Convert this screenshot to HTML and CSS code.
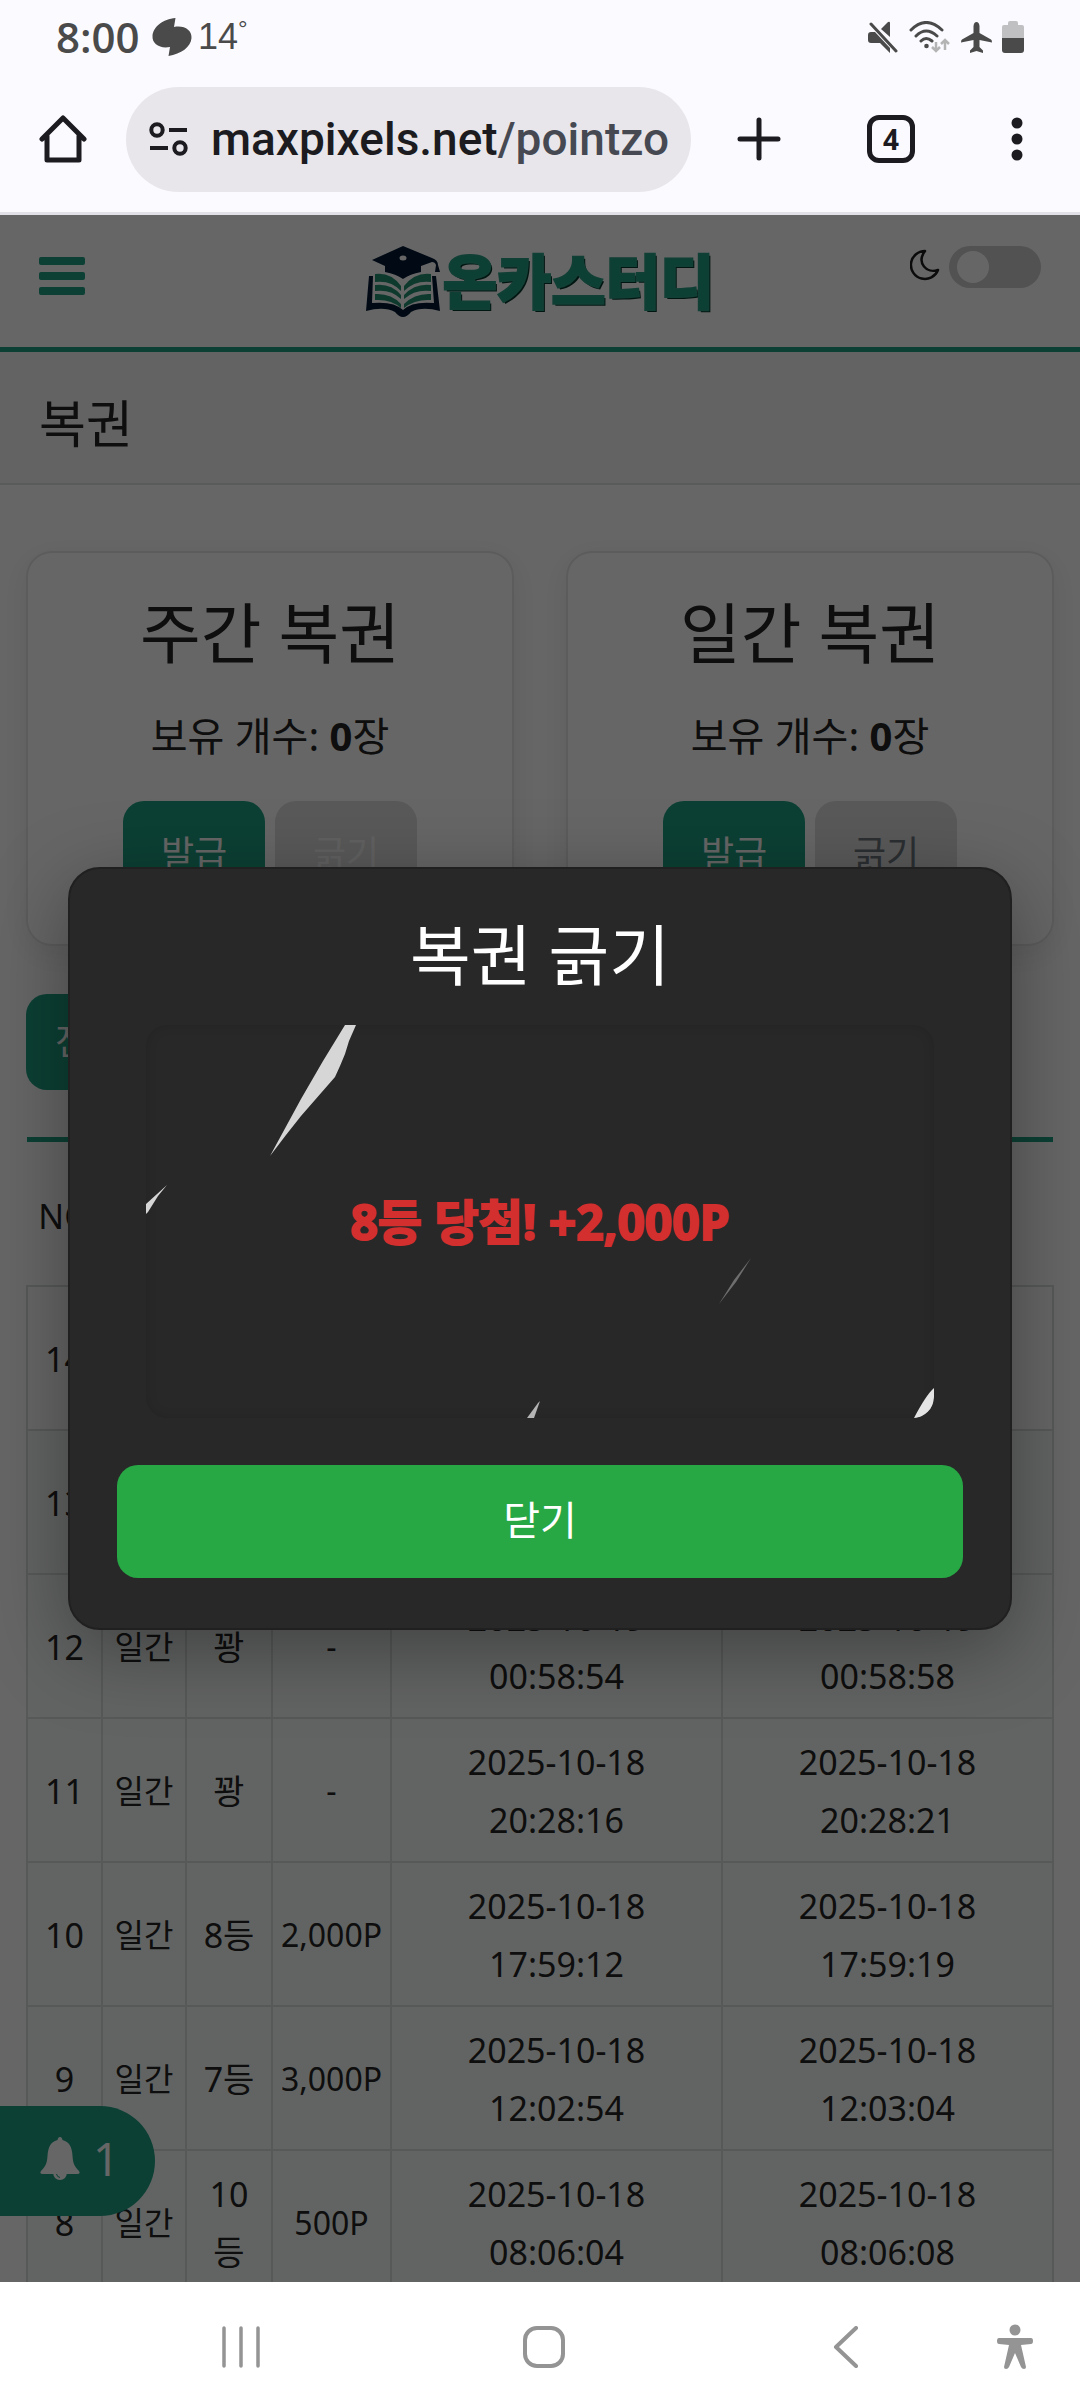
FILE: index.html
```html
<!DOCTYPE html>
<html lang="ko">
<head>
<meta charset="utf-8">
<meta name="viewport" content="width=device-width, initial-scale=1">
<title>복권</title>
<link rel="stylesheet" href="styles.css">
</head>
<body>
<div class="statusbar">
  <div class="status-left">
    <span class="clock">8:00</span>
    <svg class="weather" width="40" height="38" viewBox="0 0 40 38" aria-hidden="true"><path fill="#4a4a4a" d="M23.500 0 L22 9 C32 7 40 12 39.500 20 C39 29 29 36 16.500 38 L18 29 C8 31 0 26 .5 18 C1 9 11 1 23.500 0Z"/></svg>
    <span class="temp">14<sup>°</sup></span>
  </div>
  <div class="status-right">
    <svg width="31" height="32" viewBox="0 0 31 32" aria-hidden="true"><g fill="#4a4a4a"><path d="M0 14Q0 11 3 11H7L22 27V32L12 22H3Q0 22 0 19Z"/><path d="M13 8 20 1Q22 0 22 2V16Z"/></g><path d="M3 3 28 30" stroke="#4a4a4a" stroke-width="3" stroke-linecap="round"/></svg>
    <svg width="42" height="32" viewBox="0 0 42 32" aria-hidden="true"><g fill="none" stroke="#4a4a4a" stroke-width="3" stroke-linecap="round"><path d="M2 9Q17-6 33 9M7 15Q17 5 28 15M12 20Q17 15 23 20"/></g><circle cx="17.500" cy="25" r="2.300" fill="#4a4a4a"/><g fill="none" stroke="#b4b4b4" stroke-width="2.500"><path d="M27 21V30M23 26 27 30 31 26M36 29V19M32 23 36 19 40 23"/></g></svg>
    <svg width="31" height="31" viewBox="0 0 31 31" aria-hidden="true"><path fill="#4a4a4a" d="M15.500 0Q18 0 18.500 4V11L30 17.500Q31 18 31 20.500L18.500 18V25L22 28.500V31L15.500 29 9 31V28.500L12.500 25V18L0 20.500Q0 18 1 17.500L12.500 11V4Q13 0 15.500 0Z"/></svg>
    <svg width="22" height="32" viewBox="0 0 22 32" aria-hidden="true"><path fill="#c0c0c2" d="M6 2Q6 0 8 0H14Q16 0 16 2V4H20Q22 4 22 6V17H0V6Q0 4 2 4H6Z"/><path fill="#4a4a4a" d="M0 17H22V29Q22 32 19 32H3Q0 32 0 29Z"/></svg>
  </div>
</div>

<div class="toolbar">
  <button class="icon-btn" aria-label="홈"><svg width="48" height="48" viewBox="0 0 48 48"><path d="M3 24 24 3 45 24M8 21V45H40V21" fill="none" stroke="#1b1b20" stroke-width="5" stroke-linejoin="round" stroke-linecap="round"/></svg></button>
  <button class="omnibox"><svg class="tune" width="40" height="34" viewBox="0 0 40 34" aria-hidden="true"><g fill="none" stroke="#1b1b20" stroke-width="4"><circle cx="8" cy="8" r="5.700"/><path d="M20 8H38M1 26H19"/><circle cx="31" cy="26" r="5.700"/></g></svg><span class="url">maxpixels.net<span class="path">/pointzone</span></span></button>
  <div class="tools">
    <button class="icon-btn" aria-label="새 탭"><svg width="44" height="44" viewBox="0 0 44 44"><path d="M22 3V41M3 22H41" stroke="#1b1b20" stroke-width="5" stroke-linecap="round"/></svg></button>
    <button class="tabs" aria-label="탭 4개">4</button>
    <button class="icon-btn" aria-label="메뉴"><svg width="12" height="44" viewBox="0 0 12 44"><g fill="#1b1b20"><circle cx="6" cy="6" r="5.500"/><circle cx="6" cy="22" r="5.500"/><circle cx="6" cy="38" r="5.500"/></g></svg></button>
  </div>
</div>

<div class="page">
  <header class="site-header">
    <button class="hamburger" aria-label="전체 메뉴"><span></span><span></span><span></span></button>
    <a class="logo" href="#">
      <svg width="74" height="72" viewBox="0 0 74 72" aria-hidden="true">
        <path fill="#001833" d="M6 14 37 0 66 12 Q72 14 72 19L74 26H69L70 19Q69 16 66 16L55 20V26Q44 28 37 33 30 28 19 26V20Z"/>
        <ellipse cx="37" cy="12" rx="3.500" ry="2.500" fill="#fff"/>
        <g fill="#258f72"><path d="M9 28Q25 26 35 40V45Q25 34 9 36Z"/><path d="M9 39Q25 37 35 49V53Q25 43 9 45Z"/><path d="M9 48Q25 47 35 58V62Q25 53 9 54Z"/><path d="M65 28Q49 26 38 40V45Q49 34 65 36Z"/><path d="M65 39Q49 37 38 49V53Q49 43 65 45Z"/><path d="M65 48Q49 47 38 58V62Q49 53 65 54Z"/></g>
        <path fill="#001833" d="M3 30H7L6 57Q28 55 37 64 46 55 68 57L66 30H70L74 65Q56 60 45 66 37 76 29 66 18 60 0 65Z"/>
      </svg>
      <span class="logo-text">온카스터디</span>
    </a>
    <label class="theme">
      <svg width="30" height="32" viewBox="0 0 30 32" aria-hidden="true"><path d="M15 2A14 14 0 1 0 28 21C17 25 6 14 15 2Z" fill="none" stroke="#1d1d1d" stroke-width="2.500" stroke-linejoin="round"/></svg>
      <input type="checkbox" aria-label="다크 모드">
    </label>
  </header>

  <h1 class="page-title">복권</h1>

  <main class="content">
    <div class="cards">
      <section class="card">
        <h2>주간 복권</h2>
        <p>보유 개수: <strong>0</strong>장</p>
        <div class="card-actions"><button class="btn">발급</button><button class="btn btn-light" disabled>긁기</button></div>
      </section>
      <section class="card">
        <h2>일간 복권</h2>
        <p>보유 개수: <strong>0</strong>장</p>
        <div class="card-actions"><button class="btn">발급</button><button class="btn btn-light">긁기</button></div>
      </section>
    </div>

    <button class="btn filter">전체</button>

    <table class="history">
      <colgroup><col class="c-no"><col class="c-type"><col class="c-rank"><col class="c-prize"><col><col></colgroup>
      <thead><tr><th>NO</th><th>종류</th><th>결과</th><th>당첨금</th><th>발급일</th><th>사용일</th></tr></thead>
      <tbody>
        <tr><td>14</td><td>일간</td><td>8등</td><td>2,000P</td><td>2025-10-19 20:11:02</td><td>2025-10-19 20:11:08</td></tr>
        <tr><td>13</td><td>일간</td><td>꽝</td><td>-</td><td>2025-10-19 10:24:31</td><td>2025-10-19 10:24:36</td></tr>
        <tr><td>12</td><td>일간</td><td>꽝</td><td>-</td><td>2025-10-19 00:58:54</td><td>2025-10-19 00:58:58</td></tr>
        <tr><td>11</td><td>일간</td><td>꽝</td><td>-</td><td>2025-10-18 20:28:16</td><td>2025-10-18 20:28:21</td></tr>
        <tr><td>10</td><td>일간</td><td>8등</td><td>2,000P</td><td>2025-10-18 17:59:12</td><td>2025-10-18 17:59:19</td></tr>
        <tr><td>9</td><td>일간</td><td>7등</td><td>3,000P</td><td>2025-10-18 12:02:54</td><td>2025-10-18 12:03:04</td></tr>
        <tr><td>8</td><td>일간</td><td>10등</td><td>500P</td><td>2025-10-18 08:06:04</td><td>2025-10-18 08:06:08</td></tr>
      </tbody>
    </table>
  </main>

  <button class="notice" aria-label="알림 1개"><svg width="40" height="43" viewBox="0 0 40 43" aria-hidden="true"><path fill="#fff" d="M20 0Q22 0 22.500 3C30 5 32 11 32.500 19 33 27 35 30 39 34Q41 37 37 37H3Q-1 37 1 34C5 30 7 27 7.500 19 8 11 10 5 17.500 3Q18 0 20 0Z"/><path fill="#fff" d="M13 36H27Q26 43 20 43 14 43 13 36Z"/><path d="M16.500 37Q17 40 20 40.500" fill="none" stroke="#1ea082" stroke-width="1"/></svg><span>1</span></button>

  <div class="overlay">
    <div class="modal" role="dialog" aria-modal="true" aria-labelledby="scratch-title">
      <h2 id="scratch-title">복권 긁기</h2>
      <div class="scratch">
        <svg class="flakes" viewBox="0 0 788 393" aria-hidden="true">
          <g fill="#d6d6d6">
            <path d="M199 0H210L203 16 199 29 194 41 189 52 155 91 140 110 124 131 155 74 177 36Z"/>
            <path d="M0 179 21 160 12 171 2 187 0 189Z"/>
            <path fill="#b4b4b4" d="M381 393 392 378 394 376 388 393Z"/>
            <path fill="#e4e4e4" d="M768 393Q780 370 788 363V373A20 20 0 0 1 770 393Z"/>
          </g>
          <path fill="#6e6e6e" d="M605 233 590 257 573 279 588 255ZM399 364 393 376 390 382Z"/>
        </svg>
        <strong>8등 당첨! +2,000P</strong>
      </div>
      <button class="close">닫기</button>
    </div>
  </div>
</div>

<nav class="sysnav">
  <button class="recents" aria-label="최근 앱"><svg width="42" height="42" viewBox="0 0 42 42"><path d="M4 2V40M21 2V40M38 2V40" stroke="#949494" stroke-width="3.500" stroke-linecap="round"/></svg></button>
  <button class="home" aria-label="홈 화면"><svg width="42" height="42" viewBox="0 0 42 42"><rect x="2" y="2" width="38" height="38" rx="12" fill="none" stroke="#949494" stroke-width="4"/></svg></button>
  <button class="back" aria-label="뒤로"><svg width="26" height="42" viewBox="0 0 26 42"><path d="M23 2 3 21 23 40" fill="none" stroke="#949494" stroke-width="4" stroke-linecap="round" stroke-linejoin="round"/></svg></button>
  <button class="access" aria-label="접근성"><svg width="38" height="46" viewBox="0 0 38 46"><g fill="#949494"><circle cx="19" cy="6" r="5.500"/><path d="M3 14H35Q37 14 37 17T35 20L25 21 30 43Q30 45 28 45T25 43L19 29 13 43Q12 45 10 45T8 43L13 21 3 20Q1 20 1 17T3 14Z"/></g></svg></button>
</nav>
</body>
</html>
```
FILE: styles.css
```css
* { box-sizing: border-box; }

:root {
  --green: #1ea082;
  --ink: #242424;
  --chrome: #fbfaff;
}

body {
  margin: 0;
  height: 100vh;
  display: flex;
  flex-direction: column;
  overflow: hidden;
  background: #fff;
  color: var(--ink);
  font-family: "Noto Sans", "Noto Sans CJK KR", sans-serif;
}

button {
  padding: 0;
  border: 0;
  background: none;
  font: inherit;
  color: inherit;
}

svg { display: block; }
h1, h2, p { margin: 0; font-weight: 400; }

/* status bar */
.statusbar {
  display: flex;
  justify-content: space-between;
  align-items: center;
  height: 74px;
  padding: 0 56px;
  background: var(--chrome);
  color: #4a4a4a;
}
.status-left, .status-right { display: flex; align-items: center; }
.clock { width: 96px; font: 600 42px/48px "Open Sans", sans-serif; }
.temp { margin-left: 6px; font: 400 36px/48px "Liberation Sans", sans-serif; }
.temp sup { font-size: 24px; line-height: 0; vertical-align: 12px; }
.status-right { gap: 10px; }

/* browser toolbar */
.toolbar {
  display: flex;
  align-items: center;
  height: 141px;
  padding: 0 57px 8px 39px;
  border-bottom: 3px solid #e2e1e8;
  background: var(--chrome);
}
.omnibox {
  display: flex;
  align-items: center;
  flex: 1;
  min-width: 0;
  height: 105px;
  margin: 0 46px 0 39px;
  padding: 0 20px 0 23px;
  border-radius: 53px;
  background: #e8e6eb;
  text-align: left;
}
.tune { flex: none; }
.url {
  flex: 1;
  margin-left: 22px;
  overflow: hidden;
  white-space: nowrap;
  font: 500 46px/64px Roboto, sans-serif;
  color: #1b1b20;
}
.path { color: #464952; }
.tools { display: flex; align-items: center; }
.tabs {
  width: 48px;
  height: 48px;
  margin: 0 96px 0 86px;
  border: 5px solid #1b1b20;
  border-radius: 12px;
  font: 700 28px/38px "Noto Sans", sans-serif;
  text-align: center;
  color: #1b1b20;
}

/* page */
.page {
  position: relative;
  flex: 1;
  min-height: 0;
  overflow: hidden;
  background: #fff;
}
.site-header {
  display: grid;
  grid-template-columns: 1fr auto 1fr;
  height: 137px;
  padding: 0 39px;
  border-bottom: 5px solid var(--green);
}
.hamburger {
  display: flex;
  flex-direction: column;
  gap: 7px;
  width: 46px;
  height: 38px;
  margin-top: 42px;
}
.hamburger span { width: 100%; height: 8px; border-radius: 2px; background: var(--green); }
.logo {
  display: flex;
  gap: 3px;
  margin-top: 31px;
  height: 72px;
  text-decoration: none;
}
.logo-text {
  font: 900 59px/66px "Noto Sans CJK KR", sans-serif;
  color: var(--green);
  -webkit-text-stroke: 2px #2a9f84;
  text-shadow: 2px 2px 0 #06382c;
}
.theme {
  display: flex;
  justify-content: flex-end;
  gap: 9px;
  margin-top: 31px;
  height: 42px;
}
.theme svg { margin-top: 3px; }
.theme input {
  appearance: none;
  display: flex;
  align-items: center;
  width: 92px;
  height: 42px;
  margin: 0;
  padding-left: 8px;
  border-radius: 21px;
  background: #ccc;
}
.theme input::before {
  content: "";
  width: 32px;
  height: 32px;
  border-radius: 50%;
  background: #fff;
}
.page-title {
  height: 133px;
  padding: 0 39px;
  border-bottom: 2px solid #dee0e2;
  background: #f8f8f9;
  font-size: 51px;
  line-height: 142px;
}
.content { padding: 66px 26px 0; }

.cards { display: grid; grid-template-columns: 1fr 1fr; gap: 52px; }
.card {
  display: flex;
  flex-direction: column;
  align-items: center;
  height: 395px;
  border: 2px solid #e6e6e6;
  border-radius: 26px;
  box-shadow: 0 8px 30px rgba(0, 0, 0, .08);
}
.card h2 { margin-top: 31px; font-size: 66px; line-height: 96px; }
.card p { margin: 24px 0 33px; font-size: 40px; line-height: 64px; }
.card strong { font-weight: 700; }
.card-actions { display: flex; gap: 10px; }

.btn {
  width: 142px;
  height: 105px;
  padding-bottom: 5px;
  border-radius: 21px;
  background: var(--green);
  color: #fff;
  font-size: 36px;
}
.btn-light { background: #dedede; color: #6c757d; }
.btn-light:disabled { color: #f2f2f2; }
.filter { display: block; width: 124px; height: 96px; margin: 48px 0 47px; }

.history {
  width: 100%;
  border-collapse: collapse;
  table-layout: fixed;
  border-top: 5px solid var(--green);
  font-size: 34px;
  line-height: 58px;
  text-align: center;
}
.c-no { width: 75px; }
.c-type { width: 84px; }
.c-rank { width: 86px; }
.c-prize { width: 119px; }
.history th { height: 146px; padding: 6px 0 0; font-weight: 400; }
.history td {
  height: 144px;
  padding: 14px 0 12px;
  border: 2px solid #d9dcdb;
  word-break: break-all;
}
.history td:nth-child(n+5) { padding-inline: 60px; word-break: normal; }
.history td:nth-child(2), .history td:nth-child(4) { font-size: 32px; }
.history td:nth-child(3) { padding-inline: 16px; }
.history tbody tr:nth-child(n+2) { background: #f5f9f7; }

.notice {
  position: absolute;
  left: 0;
  bottom: 66px;
  display: flex;
  align-items: center;
  gap: 13px;
  width: 155px;
  height: 110px;
  padding: 0 0 6px 40px;
  border-radius: 0 55px 55px 0;
  background: var(--green);
  color: #fff;
  font-size: 46px;
}

/* scratch dialog */
.overlay {
  position: absolute;
  inset: 0;
  display: flex;
  align-items: center;
  justify-content: center;
  background: rgba(0, 0, 0, .6);
}
.modal {
  width: 944px;
  max-width: 90%;
  padding: 37px 47px 50px;
  border: 2px solid #202020;
  border-radius: 32px;
  background: #282828;
  box-shadow: 0 20px 80px rgba(0, 0, 0, .35);
  text-align: center;
  color: #fff;
}
.modal h2 { font-size: 66px; line-height: 96px; }
.scratch {
  display: grid;
  place-items: center;
  height: 393px;
  margin: 23px 29px 47px;
  border-radius: 21px;
  overflow: hidden;
  box-shadow: inset 0 0 12px rgba(0, 0, 0, .12);
}
.scratch > * { grid-area: 1 / 1; }
.scratch strong { font-size: 48px; line-height: 64px; color: #d32f2f; -webkit-text-stroke: 2px #d32f2f; }
.flakes { width: 100%; height: 100%; }
.close {
  width: 100%;
  height: 113px;
  padding-bottom: 8px;
  border-radius: 21px;
  background: #28a745;
  font-size: 40px;
}

/* system navigation */
.sysnav {
  display: flex;
  align-items: center;
  justify-content: space-between;
  height: 126px;
  padding: 4px 46px 0 220px;
  background: #fff;
}
.home { margin-left: 124px; }
.back { margin-left: 132px; }
```
